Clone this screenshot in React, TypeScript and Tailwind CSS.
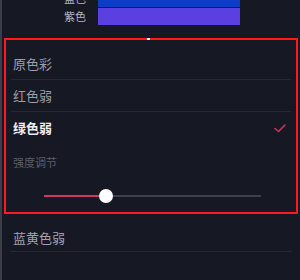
import React from 'react';

// colour filter rows
const rows = [
  { name: '原色彩', active: false },
  { name: '红色弱', active: false },
  { name: '绿色弱', active: true },
];

const swatches = [
  { label: '蓝色', color: 'bg-[#0a3fc4]' },
  { label: '紫色', color: 'bg-[#5b3fe0]' },
];

const App: React.FC = () => {
  return (
    <div
      className="w-[300px] h-[280px] overflow-hidden bg-[#161824] border-l-2 border-[#3a3d4a]"
      style={{ fontFamily: '"Noto Sans CJK SC", "Noto Sans", sans-serif' }}
    >
      {/* colour swatches, cut off at the top */}
      <div className="-mt-[10px] flex flex-col gap-[1px]">
        {swatches.map((s) => (
          <div key={s.label} className="flex items-center h-[17px]">
            <span className="w-[84px] text-right text-[11px] leading-none text-[#b4b6c0]">{s.label}</span>
            <div className={`ml-[12px] w-[142px] h-full ${s.color}`} />
          </div>
        ))}
      </div>

      <div className="mt-[13px] ml-[2px] w-[294px] h-[176px] border-2 border-[#ff1a1a] relative">
        <div className="absolute -top-[2px] left-[141px] w-[3px] h-[2px] bg-white" />
        <div className="pt-[8px] px-[5px]">
          {rows.map((r, i) => (
            <div
              key={r.name}
              className={`h-[32px] flex items-center justify-between pl-[2px] pr-[5px] ${i < 2 ? 'border-b border-[#252836]' : ''}`}
            >
              <span
                className={`text-[13px] ${r.active ? 'text-[#ececf2] font-bold' : 'text-[#9c9ea8]'}`}
              >
                {r.name}
              </span>
              {r.active && (
                <svg width="12" height="9" viewBox="0 0 12 9" fill="none">
                  <path d="M1 4.5 L4.5 7.5 L11 1" stroke="#c8365e" strokeWidth="1.6" strokeLinecap="round" strokeLinejoin="round" />
                </svg>
              )}
            </div>
          ))}
          <div className="mt-[10px] pl-[2px] text-[11px] text-[#5c5e6a]">强度调节</div>
          <div className="mt-[18px] ml-[33px] w-[217px] h-[14px] flex items-center relative">
            <div className="w-[62px] h-[2px] bg-[#d03a5a]" />
            <div className="flex-1 h-[2px] bg-[#3c3f4c]" />
            <div className="absolute left-[55px] top-0 w-[14px] h-[14px] rounded-full bg-white" />
          </div>
        </div>
      </div>

      <div className="mx-[8px] mt-[10px] h-[28px] flex items-center border-b border-[#252836] pl-[3px]">
        <span className="text-[13px] text-[#a0a2ac]">蓝黄色弱</span>
      </div>
    </div>
  );
};

export default App;
